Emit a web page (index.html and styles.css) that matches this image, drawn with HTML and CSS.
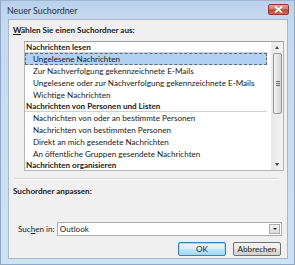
FILE: index.html
```html
<!DOCTYPE html>
<html lang="de">
<head>
    <meta charset="UTF-8">
    <title>Neuer Suchordner</title>
    <link rel="stylesheet" href="styles.css">
</head>
<body>
    <div id="dialog">
        <div class="titlebar">
            <span class="title">Neuer Suchordner</span>
            <button class="close-btn" title="Schließen">
                <svg width="9" height="7" viewBox="0 0 9 7">
                    <path d="M1 0.5 L8 6.5 M8 0.5 L1 6.5" stroke="#fff" stroke-width="1.8"/>
                </svg>
            </button>
        </div>

        <div class="client">
            <div class="caption"><u>W</u>ählen Sie einen Suchordner aus:</div>

            <div class="listbox">
                <div class="list-items">
                    <div class="group">Nachrichten lesen</div>
                    <div class="item selected">Ungelesene Nachrichten</div>
                    <div class="item">Zur Nachverfolgung gekennzeichnete E-Mails</div>
                    <div class="item">Ungelesene oder zur Nachverfolgung gekennzeichnete E-Mails</div>
                    <div class="item">Wichtige Nachrichten</div>
                    <div class="group">Nachrichten von Personen und Listen</div>
                    <div class="item">Nachrichten von oder an bestimmte Personen</div>
                    <div class="item">Nachrichten von bestimmten Personen</div>
                    <div class="item">Direkt an mich gesendete Nachrichten</div>
                    <div class="item">An öffentliche Gruppen gesendete Nachrichten</div>
                    <div class="group last">Nachrichten organisieren</div>
                </div>
                <div class="scrollbar">
                    <div class="arrow up"></div>
                    <div class="track">
                        <div class="thumb"><span class="grip"></span></div>
                    </div>
                    <div class="arrow down"></div>
                </div>
            </div>

            <div class="separator"></div>
            <div class="section-title">Suchordner anpassen:</div>

            <div class="search-row">
                <label>Suc<u>h</u>en in:</label>
                <div class="combo">
                    <span>Outlook</span>
                    <span class="combo-btn"></span>
                </div>
            </div>

            <div class="actions">
                <button class="btn default">OK</button>
                <button class="btn">Abbrechen</button>
            </div>
        </div>
    </div>
</body>
</html>
```

FILE: styles.css
```css
body {
    margin: 0;
    width: 295px;
    height: 265px;
    overflow: hidden;
    font-family: Lato, "Open Sans", sans-serif;
    font-size: 8.1px;
    color: #1a1a1a;
}

#dialog {
    width: 295px;
    height: 265px;
    box-sizing: border-box;
    padding: 0 6px 5px 7px;
    display: flex;
    flex-direction: column;
    background: linear-gradient(to bottom, #b9d1ea 0px, #c4daf0 20px, #cfe2f5 100%);
    border: 1px solid #8fa7c2;
    border-top-color: #9fb5cf;
}

.titlebar {
    height: 18px;
    display: flex;
    align-items: center;
    justify-content: space-between;
}

.title {
    font-size: 8.8px;
    color: #1e2f45;
    margin-left: -1px;
}

.close-btn {
    width: 21px;
    height: 11px;
    margin-top: -2px;
    margin-right: -1px;
    padding: 0;
    border: 1px solid #8a3a3a;
    border-radius: 2px;
    background: linear-gradient(to bottom, #e8a493 0%, #d8735f 45%, #c2412b 55%, #d16e58 100%);
    display: flex;
    align-items: center;
    justify-content: center;
}

.client {
    flex: 1;
    background: #f0f0f0;
    border: 1px solid #a6b8cc;
    display: flex;
    flex-direction: column;
    padding: 0 5px 0 4px;
}

.caption {
    font-weight: bold;
    margin-top: 4px;
    height: 12px;
    line-height: 12px;
}

.listbox {
    margin: 5px 0 0 11px;
    width: 260px;
    height: 130px;
    box-sizing: border-box;
    border: 1px solid #b5b5b5;
    border-top-color: #a0a0a0;
    background: #fff;
    display: flex;
}

.list-items {
    flex: 1;
    padding-right: 4px;
    overflow: hidden;
}

.group {
    font-weight: bold;
    height: 10px;
    line-height: 10px;
    padding-left: 1px;
    border-bottom: 1px solid #d0d0d0;
}

.group.last {
    border-bottom: none;
}

.item {
    height: 12px;
    line-height: 12px;
    padding-left: 8px;
    white-space: nowrap;
}

.item.selected {
    background: #b1d1f3;
    outline: 1px dashed #5a6a7e;
    outline-offset: -1px;
}

.scrollbar {
    width: 11px;
    display: flex;
    flex-direction: column;
    background: linear-gradient(to right, #e8e8e8, #f4f4f4);
    border-left: 1px solid #ececec;
}

.arrow {
    height: 11px;
    position: relative;
}

.arrow::after {
    content: "";
    position: absolute;
    left: 3px;
    top: 4px;
    border-left: 2.5px solid transparent;
    border-right: 2.5px solid transparent;
}

.arrow.up::after {
    border-bottom: 3px solid #4d4d4d;
}

.arrow.down::after {
    border-top: 3px solid #4d4d4d;
}

.track {
    flex: 1;
}

.thumb {
    height: 61px;
    margin: 0 1px;
    box-sizing: border-box;
    border: 1px solid #979797;
    border-radius: 2px;
    background: linear-gradient(to right, #f3f3f3, #e4e4e4 50%, #d4d4d4);
    display: flex;
    align-items: center;
    justify-content: center;
}

.grip {
    width: 4px;
    height: 5px;
    background: repeating-linear-gradient(to bottom, #6a6a6a 0, #6a6a6a 1px, transparent 1px, transparent 2px);
}

.separator {
    margin: 7px 3px 0 1px;
    border-top: 1px solid #d5d5d5;
    border-bottom: 1px solid #ffffff;
}

.section-title {
    font-weight: bold;
    margin-top: 5px;
    height: 12px;
    line-height: 12px;
}

.search-row {
    margin-top: 25px;
    display: flex;
    align-items: center;
}

.search-row label {
    width: 44px;
    padding-left: 5px;
    box-sizing: border-box;
}

.combo {
    width: 226px;
    height: 14px;
    box-sizing: border-box;
    border: 1px solid #abadb3;
    background: #fff;
    display: flex;
    align-items: center;
    justify-content: space-between;
    padding-left: 2px;
}

.combo-btn {
    width: 9px;
    height: 8px;
    margin-right: 1px;
    border: 1px solid #adadad;
    background: linear-gradient(to bottom, #f4f4f4, #dcdcdc);
    position: relative;
}

.combo-btn::after {
    content: "";
    position: absolute;
    left: 2.5px;
    top: 3px;
    border-left: 2px solid transparent;
    border-right: 2px solid transparent;
    border-top: 2px solid #222;
}

.actions {
    margin-top: 6px;
    display: flex;
    justify-content: flex-end;
    gap: 7px;
    padding-right: 1px;
}

.btn {
    width: 48px;
    height: 14px;
    padding: 0;
    font-family: inherit;
    font-size: 8.1px;
    color: #1e1e1e;
    border: 1px solid #707070;
    border-radius: 2px;
    background: linear-gradient(to bottom, #f2f2f2 0%, #ebebeb 50%, #dddddd 51%, #cfcfcf 100%);
}

.btn.default {
    border-color: #3c7fb1;
    box-shadow: inset 0 0 0 1px #9fd9f6;
    background: linear-gradient(to bottom, #eaf6fd 0%, #d9f0fc 50%, #bee6fd 51%, #a7d9f5 100%);
}
```
